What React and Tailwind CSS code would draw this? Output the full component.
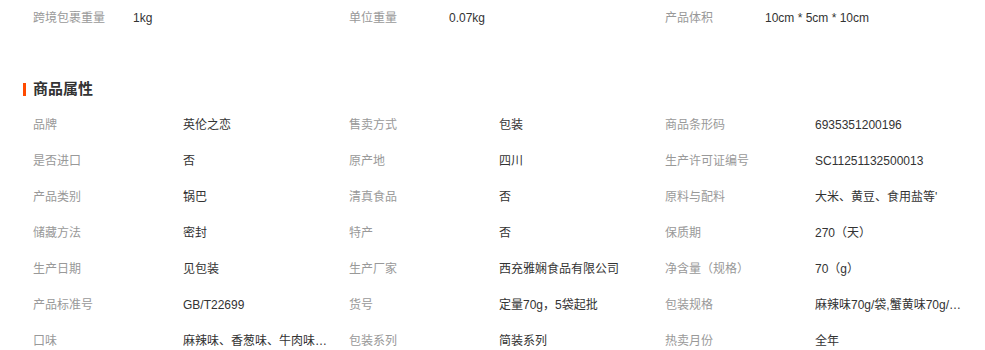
import React from "react";

const topSpecs = [
  { label: "跨境包裹重量", value: "1kg" },
  { label: "单位重量", value: "0.07kg" },
  { label: "产品体积", value: "10cm * 5cm * 10cm" },
];

const attrs = [
  ["品牌", "英伦之恋"], ["售卖方式", "包装"], ["商品条形码", "6935351200196"],
  ["是否进口", "否"], ["原产地", "四川"], ["生产许可证编号", "SC11251132500013"],
  ["产品类别", "锅巴"], ["清真食品", "否"], ["原料与配料", "大米、黄豆、食用盐等'"],
  ["储藏方法", "密封"], ["特产", "否"], ["保质期", "270（天）"],
  ["生产日期", "见包装"], ["生产厂家", "西充雅娴食品有限公司"], ["净含量（规格）", "70（g）"],
  ["产品标准号", "GB/T22699"], ["货号", "定量70g，5袋起批"], ["包装规格", "麻辣味70g/袋,蟹黄味70g/袋,香葱味70g/袋"],
  ["口味", "麻辣味、香葱味、牛肉味、蟹黄味"], ["包装系列", "简装系列"], ["热卖月份", "全年"],
];

const font = { fontFamily: '"Liberation Sans", "Noto Sans CJK SC", sans-serif' };

function App() {
  const rows = [];
  for (let i = 0; i < attrs.length; i += 3) rows.push(attrs.slice(i, i + 3));

  return (
    <div className="w-[985px] h-[350px] bg-white overflow-hidden pl-[23px] text-[12px]" style={font}>
      {/* 物流参数 */}
      <div className="flex h-[34px] items-center pl-[10px] pt-px">
        {topSpecs.map((s, idx) => (
          <div key={idx} className="flex w-[316px] items-center">
            <div className="w-[100px] text-[#999]">{s.label}</div>
            <div className="text-[#333]">{s.value}</div>
          </div>
        ))}
      </div>

      <div className="mt-[45px] flex h-[20px] items-center">
        <span className="w-[3px] h-[13px] bg-[#ff4a00] mr-[7px]"></span>
        <h3 className="text-[15px] font-bold text-[#333]">商品属性</h3>
      </div>

      <div className="mt-[8px] pl-[10px]">
        {rows.map((row, rowIdx) => (
          <div key={rowIdx} className="flex h-[36px] items-center">
            {row.map(([label, value], idx) => (
              <div key={idx} className="flex w-[316px] items-center">
                <div className="w-[150px] shrink-0 text-[#999]">{label}</div>
                <div className="w-[148px] overflow-hidden text-ellipsis whitespace-nowrap text-[#333]">{value}</div>
              </div>
            ))}
          </div>
        ))}
      </div>
    </div>
  );
}

export default App;
